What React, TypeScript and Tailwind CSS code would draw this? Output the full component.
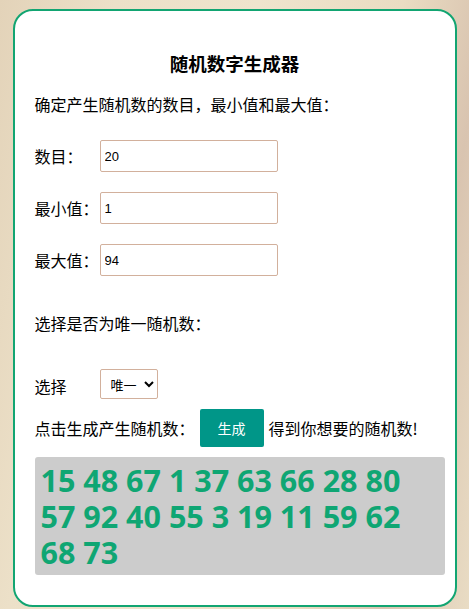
import { useState } from 'react';

const fields = [
  { label: '数目：', value: '20' },
  { label: '最小值：', value: '1' },
  { label: '最大值：', value: '94' },
];

const numbers = [15, 48, 67, 1, 37, 63, 66, 28, 80, 57, 92, 40, 55, 3, 19, 11, 59, 62, 68, 73];

function App() {
  const [unique, setUnique] = useState('yes');

  return (
    <div className="min-h-[609px] overflow-hidden bg-[linear-gradient(100deg,#e3d3b9_0%,#ece0c8_20%,#efe4cd_45%,#eadcc2_70%,#d9c4b0_85%,#e9dcc4_100%)] pt-[9px] font-['Noto_Sans_CJK_SC',sans-serif] text-[16px] text-black">
      <div className="mx-auto w-[444px] rounded-[20px] border-2 border-[#12a572] bg-white pb-[30px] pl-5 pr-2.5 pt-10">
        <h1 className="-ml-2.5 text-center text-[18.5px] font-bold leading-6">随机数字生成器</h1>

        <p className="mt-[18px] leading-[22px]">确定产生随机数的数目，最小值和最大值：</p>

        <div className="mt-[25px] flex flex-col gap-5">
          {fields.map((f) => (
            <div key={f.label} className="flex items-center">
              <span className="w-[65px] leading-[22px]">{f.label}</span>
              <input
                defaultValue={f.value}
                className="h-8 w-[178px] rounded-[2px] border border-[#d2b09c] px-1 font-['Liberation_Sans',sans-serif] text-[13px] outline-none"
              />
            </div>
          ))}
        </div>

        <p className="mt-9 leading-[22px]">选择是否为唯一随机数：</p>

        <div className="mt-[35px] flex items-center">
          <span className="w-[65px] pt-1 leading-[22px]">选择</span>
          <select
            value={unique}
            onChange={(e) => setUnique(e.target.value)}
            className="h-[30px] w-[58px] rounded-[2px] border border-[#d2b09c] bg-white pl-1.5 text-[13px] outline-none"
          >
            <option value="yes">唯一</option>
            <option value="no">不唯一</option>
          </select>
        </div>

        <div className="mt-2.5 flex items-center">
          <span className="leading-[22px]">点击生成产生随机数：</span>
          <button className="ml-[5px] h-[38px] w-16 rounded-[2px] bg-[#009688] text-[14px] text-white">生成</button>
          <span className="ml-[5px] leading-[22px]">得到你想要的随机数!</span>
        </div>

        <div className="mt-2.5 rounded-[3px] bg-[#cccccc] px-1.5 py-[5px] font-['Open_Sans',sans-serif] text-[30.5px] font-bold leading-9 text-[#0fa673]">
          {numbers.join(' ')}
        </div>
      </div>
    </div>
  );
}

export default App;
